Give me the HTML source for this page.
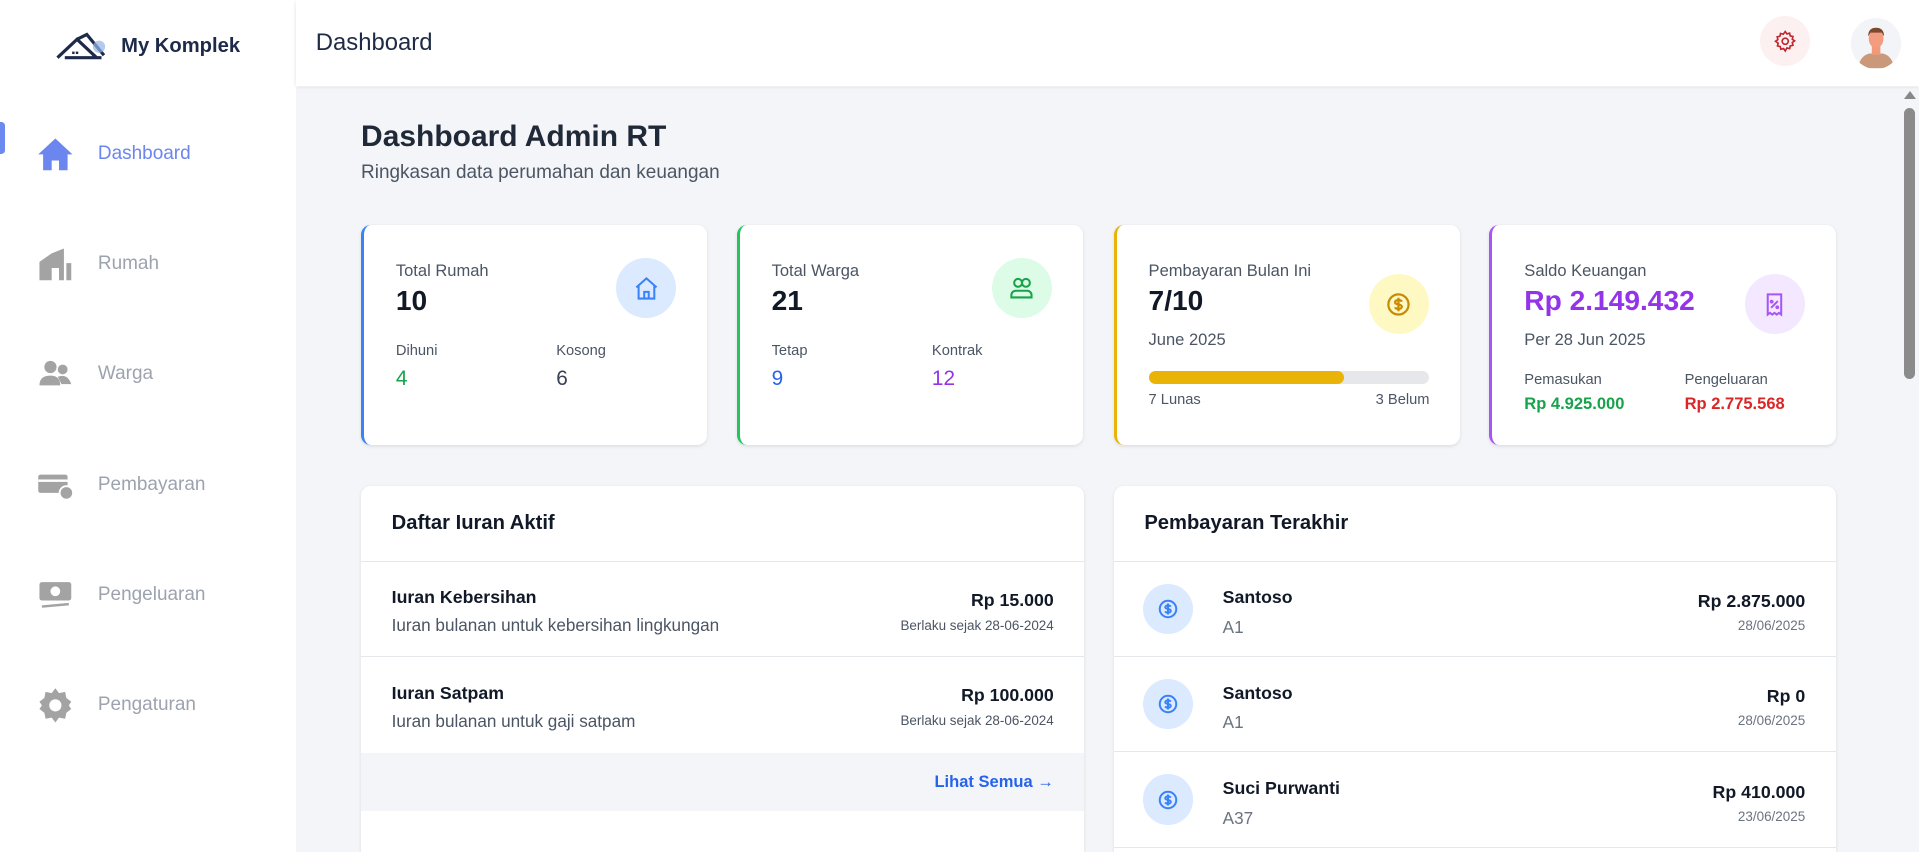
<!DOCTYPE html>
<html><head><meta charset="utf-8"><style>
*{box-sizing:border-box;margin:0;padding:0}
html,body{width:1919px;height:852px;overflow:hidden;background:#fff}
#r{zoom:1.2239;width:1568px;height:696px;position:relative;font-family:"Liberation Sans",sans-serif;color:#111827;overflow:hidden}
.a{position:absolute}
.side{left:0;top:0;width:242px;height:696px;background:#fff}
.nav{left:30px;display:flex;align-items:center;font-size:15.5px;color:#9ca3af}
.nav svg{width:30px;height:30px;margin-right:20px}
.main{left:242px;top:71px;width:1326px;height:625px;background:#f4f5f8}
.hdr{left:242px;top:0;width:1326px;height:70px;background:#fff;box-shadow:0 1px 3px rgba(0,0,0,.12)}
.card{background:#fff;border-radius:8px;box-shadow:0 1px 3px rgba(0,0,0,.1);top:184px;height:180px;width:283px}
.lbl{font-size:13.5px;color:#4b5563}
.big{font-size:23px;font-weight:bold}
.sm{font-size:12px;color:#4b5563}
.ic{width:49px;height:49px;border-radius:50%;display:flex;align-items:center;justify-content:center}
.panel{background:#fff;border-radius:8px 8px 0 0;box-shadow:0 1px 3px rgba(0,0,0,.1);top:397px;height:299px;overflow:hidden}
.ph{font-size:16.5px;font-weight:bold;color:#111827}
.row{border-top:1px solid #e5e7eb;height:78px;left:0;right:0}
</style></head><body><div id="r">
<div class="a side"></div>
<div class="a main"></div>
<div class="a hdr"></div>
<svg class="a" style="left:45px;top:26px" width="44" height="24" viewBox="0 0 44 24"><path d="M2 21 L18 6 L34 21 M8 21H38 M18 6 L26 2 L40 19" fill="none" stroke="#1e2a4a" stroke-width="2.6"/><circle cx="36" cy="12" r="5" fill="#93b4e8" opacity=".7"/><rect x="14" y="16" width="2" height="2" fill="#1e2a4a"/><rect x="17" y="16" width="2" height="2" fill="#1e2a4a"/></svg>
<div class="a" style="left:99px;top:29px;font-size:16.5px;font-weight:bold;color:#1e2a4a">My Komplek</div>
<div class="a" style="left:258px;top:24px;font-size:19.5px;color:#1f2a44">Dashboard</div>
<div class="a" style="left:1438px;top:13px;width:41px;height:41px;border-radius:50%;background:#fdf0f1;display:flex;align-items:center;justify-content:center"><svg width="20" height="20" viewBox="0 0 24 24" fill="none" stroke="#c0262d" stroke-width="1.6"><circle cx="12" cy="12" r="3"/><path d="M12 2.5l1.6 2.3 2.7-.7.6 2.7 2.7.6-.7 2.7 2.3 1.6-2.3 1.6.7 2.7-2.7.6-.6 2.7-2.7-.7L12 21.5l-1.6-2.3-2.7.7-.6-2.7-2.7-.6.7-2.7L2.5 12l2.3-1.6-.7-2.7 2.7-.6.6-2.7 2.7.7z"/></svg></div>
<div class="a" style="left:1512px;top:15px;width:41px;height:41px;border-radius:50%;background:#f3f4f8;overflow:hidden"><svg width="41" height="41" viewBox="0 0 41 41"><path d="M6 41 Q7 31 15 29 L26 29 Q34 31 35 41Z" fill="#c9997a"/><rect x="17" y="22" width="7" height="8" fill="#f09a7a"/><ellipse cx="20.5" cy="17" rx="6" ry="7.5" fill="#f39c80"/><path d="M14 15 Q14 8 20.5 8 Q27 8 27 15 L25 12 L16 12Z" fill="#7b4a2e"/></svg></div>
<div class="a" style="left:1556px;top:74px;width:0;height:0;border-left:5px solid transparent;border-right:5px solid transparent;border-bottom:7px solid #888"></div>
<div class="a" style="left:1556px;top:88px;width:9px;height:222px;border-radius:5px;background:#8b8b8b"></div>
<div class="a" style="left:0;top:100px;width:4px;height:26px;background:#6b8af0;border-radius:0 3px 3px 0"></div>
<div class="a nav" style="top:111px;color:#6b86ef"><svg viewBox="0 0 30 30"><path d="M15 2 L29 15 H25 V28 H18 V20 H12 V28 H5 V15 H1Z" fill="#6b86ef"/></svg>Dashboard</div>
<div class="a nav" style="top:201px"><svg viewBox="0 0 30 30"><path d="M2 28V13L12 6L22 2V28H18V18H12V28Z M24 14H28V28H24Z" fill="#a3a3a3"/></svg>Rumah</div>
<div class="a nav" style="top:291px"><svg viewBox="0 0 30 30"><circle cx="11" cy="9" r="5" fill="#a3a3a3"/><circle cx="21" cy="11" r="4" fill="#a3a3a3"/><path d="M2 24Q2 16 11 16Q19 16 19 24Z M17 17Q25 14 28 23H20Z" fill="#a3a3a3"/></svg>Warga</div>
<div class="a nav" style="top:381px"><svg viewBox="0 0 30 30"><rect x="1" y="7" width="24" height="15" rx="2" fill="#a3a3a3"/><rect x="1" y="11" width="24" height="2" fill="#fff"/><circle cx="24" cy="22" r="5.5" fill="#a3a3a3" stroke="#fff" stroke-width="1.5"/></svg>Pembayaran</div>
<div class="a nav" style="top:471px"><svg viewBox="0 0 30 30"><rect x="2" y="5" width="26" height="15" rx="2" fill="#a3a3a3"/><circle cx="15" cy="12.5" r="4" fill="#fff"/><path d="M4 25 L26 23" stroke="#a3a3a3" stroke-width="2"/></svg>Pengeluaran</div>
<div class="a nav" style="top:561px"><svg viewBox="0 0 30 30"><path d="M15 1l3 4 5-1 1 5 4 3-2 3 2 3-4 3-1 5-5-1-3 4-3-4-5 1-1-5-4-3 2-3-2-3 4-3 1-5 5 1z" fill="#a3a3a3"/><circle cx="15" cy="15" r="5" fill="#fff"/></svg>Pengaturan</div>
<div class="a" style="left:295px;top:98px;font-size:24.5px;font-weight:bold;color:#1f2937">Dashboard Admin RT</div>
<div class="a" style="left:295px;top:132px;font-size:15.5px;color:#4b5563">Ringkasan data perumahan dan keuangan</div>
<div class="a card" style="left:295px;border-left:3px solid #3b82f6">
 <div class="a lbl" style="left:26px;top:29px">Total Rumah</div><div class="a big" style="left:26px;top:49px">10</div>
 <div class="a ic" style="left:206px;top:27px;background:#dbeafe"><svg width="22" height="22" viewBox="0 0 24 24" fill="none" stroke="#3b82f6" stroke-width="1.8"><path d="M3 11L12 3l9 8M5 9v12h14V9M10 21v-6h4v6"/></svg></div>
 <div class="a sm" style="left:26px;top:96px">Dihuni</div><div class="a" style="left:26px;top:116px;font-size:17px;color:#16a34a">4</div>
 <div class="a sm" style="left:157px;top:96px">Kosong</div><div class="a" style="left:157px;top:116px;font-size:17px;color:#374151">6</div>
</div>
<div class="a card" style="left:602px;border-left:3px solid #22c55e">
 <div class="a lbl" style="left:26px;top:29px">Total Warga</div><div class="a big" style="left:26px;top:49px">21</div>
 <div class="a ic" style="left:206px;top:27px;background:#dcfce7"><svg width="22" height="22" viewBox="0 0 24 24" fill="none" stroke="#16a34a" stroke-width="1.8"><circle cx="9" cy="7" r="3.5"/><circle cx="16" cy="7" r="3.5"/><path d="M3 20v-2a4 4 0 014-4h10a4 4 0 014 4v2z"/></svg></div>
 <div class="a sm" style="left:26px;top:96px">Tetap</div><div class="a" style="left:26px;top:116px;font-size:17px;color:#2563eb">9</div>
 <div class="a sm" style="left:157px;top:96px">Kontrak</div><div class="a" style="left:157px;top:116px;font-size:17px;color:#9333ea">12</div>
</div>
<div class="a card" style="left:910px;border-left:3px solid #eab308">
 <div class="a lbl" style="left:26px;top:29px">Pembayaran Bulan Ini</div><div class="a big" style="left:26px;top:49px">7/10</div>
 <div class="a lbl" style="left:26px;top:86px">June 2025</div>
 <div class="a ic" style="left:206px;top:40px;background:#fef9c3"><svg width="22" height="22" viewBox="0 0 24 24" fill="none" stroke="#ca8a04" stroke-width="2"><circle cx="12" cy="12" r="9"/><path d="M15 9.5c-.5-1-1.5-1.5-3-1.5s-3 .7-3 2 1.3 1.7 3 2 3 .8 3 2-1.3 2-3 2-2.6-.6-3-1.5M12 6v12"/></svg></div>
 <div class="a" style="left:26px;top:119px;width:229px;height:11px;border-radius:6px;background:#e5e7eb"><div style="width:160px;height:11px;border-radius:6px;background:#eab308"></div></div>
 <div class="a sm" style="left:26px;top:136px">7 Lunas</div><div class="a sm" style="right:25px;top:136px">3 Belum</div>
</div>
<div class="a card" style="left:1217px;border-left:3px solid #a855f7">
 <div class="a lbl" style="left:26px;top:29px">Saldo Keuangan</div><div class="a big" style="left:26px;top:49px;color:#9333ea">Rp 2.149.432</div>
 <div class="a lbl" style="left:26px;top:86px">Per 28 Jun 2025</div>
 <div class="a ic" style="left:206px;top:40px;background:#f3e8ff"><svg width="22" height="22" viewBox="0 0 24 24" fill="none" stroke="#a855f7" stroke-width="1.8"><path d="M6 3h12v18l-2-1.5-2 1.5-2-1.5-2 1.5-2-1.5-2 1.5z M9 15l6-6"/><circle cx="9.5" cy="9.5" r=".8"/><circle cx="14.5" cy="14.5" r=".8"/></svg></div>
 <div class="a sm" style="left:26px;top:120px">Pemasukan</div><div class="a" style="left:26px;top:138px;font-size:13.5px;font-weight:bold;color:#16a34a">Rp 4.925.000</div>
 <div class="a sm" style="left:157px;top:120px">Pengeluaran</div><div class="a" style="left:157px;top:138px;font-size:13.5px;font-weight:bold;color:#dc2626">Rp 2.775.568</div>
</div>
<div class="a panel" style="left:295px;width:591px">
 <div class="a ph" style="left:25px;top:21px">Daftar Iuran Aktif</div>
 <div class="a row" style="top:61px">
  <div class="a" style="left:25px;top:21px;font-size:14.5px;font-weight:bold">Iuran Kebersihan</div>
  <div class="a" style="left:25px;top:44px;font-size:14px;color:#4b5563">Iuran bulanan untuk kebersihan lingkungan</div>
  <div class="a" style="right:25px;top:23px;font-size:14.5px;font-weight:bold">Rp 15.000</div>
  <div class="a" style="right:25px;top:46px;font-size:11px;color:#4b5563">Berlaku sejak 28-06-2024</div>
 </div>
 <div class="a row" style="top:139px">
  <div class="a" style="left:25px;top:21px;font-size:14.5px;font-weight:bold">Iuran Satpam</div>
  <div class="a" style="left:25px;top:44px;font-size:14px;color:#4b5563">Iuran bulanan untuk gaji satpam</div>
  <div class="a" style="right:25px;top:23px;font-size:14.5px;font-weight:bold">Rp 100.000</div>
  <div class="a" style="right:25px;top:46px;font-size:11px;color:#4b5563">Berlaku sejak 28-06-2024</div>
 </div>
 <div class="a" style="left:0;right:0;top:218px;height:48px;background:#f4f5f8"><div class="a" style="right:25px;top:16px;font-size:13.5px;font-weight:bold;color:#2563eb">Lihat Semua →</div></div>
</div>
<div class="a panel" style="left:910px;width:590px">
 <div class="a ph" style="left:25px;top:21px">Pembayaran Terakhir</div>
 <div class="a row" style="top:61px">
  <div class="a ic" style="left:24px;top:18px;width:41px;height:41px;background:#dbeafe"><svg width="18" height="18" viewBox="0 0 24 24" fill="none" stroke="#3b82f6" stroke-width="2.2"><circle cx="12" cy="12" r="9"/><path d="M15 9.5c-.5-1-1.5-1.5-3-1.5s-3 .7-3 2 1.3 1.7 3 2 3 .8 3 2-1.3 2-3 2-2.6-.6-3-1.5M12 6v12"/></svg></div>
  <div class="a" style="left:89px;top:21px;font-size:14.5px;font-weight:bold">Santoso</div><div class="a" style="left:89px;top:45px;font-size:14px;color:#6b7280">A1</div>
  <div class="a" style="right:25px;top:24px;font-size:14.5px;font-weight:bold">Rp 2.875.000</div><div class="a" style="right:25px;top:46px;font-size:11px;color:#6b7280">28/06/2025</div>
 </div>
 <div class="a row" style="top:139px">
  <div class="a ic" style="left:24px;top:18px;width:41px;height:41px;background:#dbeafe"><svg width="18" height="18" viewBox="0 0 24 24" fill="none" stroke="#3b82f6" stroke-width="2.2"><circle cx="12" cy="12" r="9"/><path d="M15 9.5c-.5-1-1.5-1.5-3-1.5s-3 .7-3 2 1.3 1.7 3 2 3 .8 3 2-1.3 2-3 2-2.6-.6-3-1.5M12 6v12"/></svg></div>
  <div class="a" style="left:89px;top:21px;font-size:14.5px;font-weight:bold">Santoso</div><div class="a" style="left:89px;top:45px;font-size:14px;color:#6b7280">A1</div>
  <div class="a" style="right:25px;top:24px;font-size:14.5px;font-weight:bold">Rp 0</div><div class="a" style="right:25px;top:46px;font-size:11px;color:#6b7280">28/06/2025</div>
 </div>
 <div class="a row" style="top:217px">
  <div class="a ic" style="left:24px;top:18px;width:41px;height:41px;background:#dbeafe"><svg width="18" height="18" viewBox="0 0 24 24" fill="none" stroke="#3b82f6" stroke-width="2.2"><circle cx="12" cy="12" r="9"/><path d="M15 9.5c-.5-1-1.5-1.5-3-1.5s-3 .7-3 2 1.3 1.7 3 2 3 .8 3 2-1.3 2-3 2-2.6-.6-3-1.5M12 6v12"/></svg></div>
  <div class="a" style="left:89px;top:21px;font-size:14.5px;font-weight:bold">Suci Purwanti</div><div class="a" style="left:89px;top:45px;font-size:14px;color:#6b7280">A37</div>
  <div class="a" style="right:25px;top:24px;font-size:14.5px;font-weight:bold">Rp 410.000</div><div class="a" style="right:25px;top:46px;font-size:11px;color:#6b7280">23/06/2025</div>
 </div>
 <div class="a row" style="top:295px;height:4px"></div>
</div>
</div></body></html>
